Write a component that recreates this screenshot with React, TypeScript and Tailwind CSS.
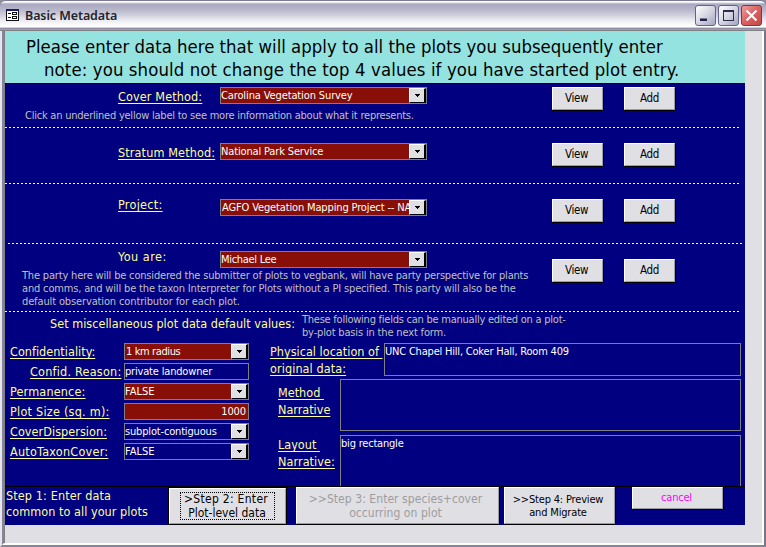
import React from "react";
import clsx from "clsx";

const base = "block whitespace-pre font-['DejaVu_Sans_Condensed','DejaVu_Sans',sans-serif]";

function Label({ text, link = true, className }: { text: string; link?: boolean; className?: string }) {
  return (
    <span className={clsx(base, "text-[12.5px] leading-[17px] text-[#ffff99]", className)}>
      <span className={clsx(link && "underline decoration-1 underline-offset-2 [text-decoration-skip-ink:none]")}>{text}</span>
    </span>
  );
}

function Field({ text, combo, red, className, textClass }: { text: string; combo?: boolean; red?: boolean; className?: string; textClass?: string }) {
  return (
    <div className={clsx("flex shrink-0 border border-[#808080]", red ? "bg-[#880e08]" : "bg-[#000080]", className)}>
      <span className={clsx(base, "min-w-0 flex-1 overflow-hidden text-[11px] leading-[15px] text-white", textClass)}>{text}</span>
      {combo && (
        <span className="flex h-[15px] w-[17px] shrink-0 items-center justify-center border-t border-r-2 border-b border-l border-t-white border-r-black border-b-black border-l-white bg-[#e0dfe3]">
          <svg width="5" height="3" viewBox="0 0 5 3" shapeRendering="crispEdges">
            <path d="M0 0h5v1H0zM1 1h3v1H1zM2 2h1v1H2z" />
          </svg>
        </span>
      )}
    </div>
  );
}

function Button({ children, className }: { children: React.ReactNode; className?: string }) {
  return (
    <div className={clsx("shrink-0 border-r border-b border-black", className)}>
      <button className={clsx(base, "flex h-full w-full items-center justify-center border border-t-white border-r-[#9d9da1] border-b-[#9d9da1] border-l-white bg-[#e0dfe3]")}>
        {children}
      </button>
    </div>
  );
}

function Dashes({ className }: { className?: string }) {
  return <div className={clsx("h-px w-[735px] shrink-0 bg-[repeating-linear-gradient(90deg,#ffffcc_0_2px,transparent_2px_4px)]", className)} />;
}

type SectionProps = {
  label: string;
  value: string;
  link?: boolean;
  className: string;
  labelClass: string;
  valueClass: string;
  buttonClass?: string;
  children?: React.ReactNode;
};

function Section({ label, value, link, className, labelClass, valueClass, buttonClass, children }: SectionProps) {
  return (
    <div className={clsx("flex shrink-0 items-start", className)}>
      <div className="w-[547px] shrink-0">
        <div className="flex h-[17px] items-start pl-[113px]">
          <div className="w-[102px] shrink-0">
            <Label text={label} link={link} className={labelClass} />
          </div>
          <Field text={value} combo red className="h-[17px] w-[207px]" textClass={valueClass} />
        </div>
        {children}
      </div>
      <div className={clsx("flex gap-[20px] text-[11.5px]", buttonClass)}>
        <Button className="h-[24px] w-[52px] tracking-[-0.4px]">
          <span className="pt-px pr-[2px]">View</span>
        </Button>
        <Button className="h-[24px] w-[52px] tracking-[-0.3px]">
          <span className="pt-px">Add</span>
        </Button>
      </div>
    </div>
  );
}

function TitleBar() {
  return (
    <div className="flex h-[31px] shrink-0 items-start rounded-t-[6px] border-t border-[#7b7b98] bg-[linear-gradient(180deg,#fff_0,#fff_1px,#a9a8c0_3px,#b5b4c8_8px,#cfcfdc_14px,#eeeef3_20px,#fff_25px,#fff_26px,#a5a4b8_27px,#77768f_28px,#c9c8d2_29px,#808080_29px)] pl-[6px]">
      <svg className="mt-[8px] shrink-0" width="13" height="12" viewBox="0 0 13 12" shapeRendering="crispEdges">
        <path d="M0 0h13v12H0z" fill="#111" />
        <path d="M1 2h11v9H1z" fill="#fff" />
        <path d="M0 0h13v2H0z" fill="#1c1c6c" />
        <path d="M2 4h3v1H2zM2 8h3v1H2zM6 3h5v3H6zM6 7h5v3H6z" fill="#111" />
        <path d="M7 4h3v1H7zM7 8h3v1H7z" fill="#fff" />
      </svg>
      <span className="ml-[6px] mt-[6px] w-[670px] shrink-0 whitespace-pre font-['Noto_Sans',sans-serif] text-[12.5px] leading-[18px] font-semibold tracking-[-0.1px] text-[#24242e]">Basic Metadata</span>
      <div className="mt-[4px] flex shrink-0 gap-[2px]">
        <span className="flex h-[21px] w-[21px] rounded-[3px] border border-[#62628a] bg-[linear-gradient(135deg,#fff,#dadae6_45%,#a4a4c0)] pl-[4px] pt-[12px]">
          <span className="h-[3px] w-[7px] border-t border-[#77778f] bg-[#222244]" />
        </span>
        <span className="flex h-[21px] w-[21px] items-center justify-center rounded-[3px] border border-[#62628a] bg-[linear-gradient(135deg,#fff,#dadae6_45%,#a4a4c0)]">
          <span className="h-[11px] w-[11px] border border-t-2 border-[#2c2c48]" />
        </span>
        <span className="flex h-[21px] w-[21px] items-center justify-center rounded-[3px] border border-[#8c3040] bg-[linear-gradient(135deg,#f0a0a0,#dc6464_45%,#c04848)]">
          <svg width="13" height="13" viewBox="0 0 13 13">
            <path d="M1.5 1.5l10 10M11.5 1.5l-10 10" stroke="#fff" strokeWidth="2.2" />
          </svg>
        </span>
      </div>
    </div>
  );
}

const grey = "text-[11px] leading-[13px] text-[#c0c0c0]";

export default function App() {
  return (
    <div className="flex h-[547px] w-[766px] flex-col overflow-hidden bg-[#8f8e9f]">
      <TitleBar />
      <div className="flex h-[516px] flex-col border-r-2 border-b-2 border-l-2 border-r-[#77768f] border-b-[#8584a0] border-l-[#e6e6ec]">
        <div className="flex h-[514px] flex-col border-r-2 border-b-2 border-l-2 border-r-[#fffdf5] border-b-[#fffdf5] border-l-[#8685a0] bg-[#e0dfe3]">
          <div className="flex h-[512px] flex-col border-l border-[#808080]">
            <div className="h-[53px] w-[740px] shrink-0 border-b border-black bg-[#94e3e1] pt-[4px] text-[18.4px] leading-[23px] text-black">
              <p className={clsx(base, "pl-[21px] tracking-[0.01px]")}>Please enter data here that will apply to all the plots you subsequently enter</p>
              <p className={clsx(base, "pl-[39px] tracking-[0.11px]")}>note: you should not change the top 4 values if you have started plot entry.</p>
            </div>
            <div className="flex h-[402px] w-[740px] shrink-0 flex-col overflow-hidden bg-[#000080]">
              <Section label="Cover Method:" value="Carolina Vegetation Survey" className="h-[43px] pt-[3px]" labelClass="mt-[1px] tracking-[0.14px]" valueClass="tracking-[-0.12px]">
                <p className={clsx(base, grey, "pl-[20px] pt-[5px] tracking-[-0.23px]")}>Click an underlined yellow label to see more information about what it represents.</p>
              </Section>
              <Dashes />
              <Section label="Stratum Method:" value="National Park Service" className="h-[55px] pt-[15px]" labelClass="mt-[1px] tracking-[0.14px]" valueClass="tracking-[-0.15px]" />
              <Dashes />
              <Section label="Project:" value="AGFO Vegetation Mapping Project -- NA" className="h-[59px] pt-[15px]" labelClass="-mt-[3px] tracking-[0.3px]" valueClass="pl-px tracking-[-0.14px]" />
              <Dashes className="ml-[3px]" />
              <Section label="You are:" link={false} value="Michael Lee" className="h-[67px] pt-[7px]" labelClass="-mt-[3px] tracking-[0.5px]" valueClass="tracking-[-0.3px]" buttonClass="mt-[8px]">
                <div className={clsx(grey, "pl-[17px] pt-px")}>
                  <p className={clsx(base, "tracking-[-0.18px]")}>The party here will be considered the submitter of plots to vegbank, will have party perspective for plants</p>
                  <p className={clsx(base, "tracking-[-0.16px]")}>and comms, and will be the taxon Interpreter for Plots without a PI specified. This party will also be the</p>
                  <p className={clsx(base, "tracking-[-0.13px]")}>default observation contributor for each plot.</p>
                </div>
              </Section>
              <Dashes />
              <div className="flex h-[31px] shrink-0 items-start pl-[45px]">
                <Label link={false} text="Set miscellaneous plot data default values:" className="mt-[3px] w-[252px] tracking-[0.04px]" />
                <div className={clsx(grey, "mt-px")}>
                  <p className={clsx(base, "tracking-[-0.24px]")}>These following fields can be manually edited on a plot-</p>
                  <p className={clsx(base, "tracking-[-0.16px]")}>by-plot basis in the next form.</p>
                </div>
              </div>
              <div className="flex h-[143px] shrink-0 items-start pl-[5px]">
                <div className="grid w-[260px] shrink-0 grid-cols-[114px_125px] auto-rows-[20px] items-start">
                  <Label text="Confidentiality:" className="tracking-[0.03px]" />
                  <Field text="1 km radius" combo red className="h-[17px]" textClass="pl-px tracking-[-0.38px]" />
                  <Label text="Confid. Reason:" className="pl-[20px] tracking-[0.23px]" />
                  <Field text="private landowner" className="h-[17px]" textClass="tracking-[-0.18px]" />
                  <Label text="Permanence:" className="tracking-[0.18px]" />
                  <Field text="FALSE" combo red className="h-[17px]" textClass="" />
                  <Label text="Plot Size (sq. m):" className="tracking-[0.25px]" />
                  <Field text="1000" red className="h-[17px]" textClass="pr-[2px] text-right tracking-[-0.1px]" />
                  <Label text="CoverDispersion:" className="tracking-[0.06px]" />
                  <Field text="subplot-contiguous" combo className="h-[17px]" textClass="tracking-[-0.17px]" />
                  <Label text="AutoTaxonCover:" className="tracking-[0.25px]" />
                  <Field text="FALSE" combo className="h-[17px]" textClass="" />
                </div>
                <div className="w-[471px]">
                  <div className="flex h-[33px]">
                    <div className="w-[114px] shrink-0">
                      <Label text="Physical location of " className="leading-[17px]! tracking-[0.03px]" />
                      <Label text="original data:" className="leading-[17px]! tracking-[0.1px]" />
                    </div>
                    <Field text="UNC Chapel Hill, Coker Hall, Room 409" className="h-[33px] w-[357px]" textClass="tracking-[-0.2px]" />
                  </div>
                  <div className="mt-[3px] flex pl-[8px]">
                    <div className="w-[62px] shrink-0 pt-[5px]">
                      <Label text="Method " className="leading-[17px]! tracking-[0.02px]" />
                      <Label text="Narrative" className="leading-[17px]!" />
                    </div>
                    <Field text="" className="h-[52px] w-[401px]" />
                  </div>
                  <div className="mt-[4px] flex pl-[8px]">
                    <div className="w-[62px] shrink-0 pt-px">
                      <Label text="Layout " className="leading-[17px]! tracking-[0.02px]" />
                      <Label text="Narrative:" className="leading-[17px]! tracking-[0.08px]" />
                    </div>
                    <Field text="big rectangle" className="h-[60px] w-[401px]" textClass="tracking-[-0.2px]" />
                  </div>
                </div>
              </div>
            </div>
            <div className="flex h-[39px] w-[740px] shrink-0 items-start border-t border-black bg-[#000080]">
              <div className="w-[163px] shrink-0 pl-px pt-px">
                <Label link={false} text="Step 1: Enter data" className="leading-[16px]! tracking-[0.13px]" />
                <Label link={false} text="common to all your plots" className="leading-[16px]! tracking-[0.06px]" />
              </div>
              <Button className="h-[38px] w-[119px] border-t border-l text-[12px] leading-[14px]">
                <span className="flex h-[28px] w-[95px] flex-col items-center border border-dotted border-black pr-[3px] leading-[14px]">
                  <span className="-mt-px tracking-[0.3px]">{">Step 2: Enter"}</span>
                  <span className="pl-[2px]">Plot-level data</span>
                </span>
              </Button>
              <Button className="ml-[9px] h-[38px] w-[204px] text-[12px] leading-[14px] tracking-[0.06px] text-[#9d9da1] [text-shadow:1px_1px_0_#fff]">
                <span className="pr-[4px]">{">>Step 3: Enter species+cover\noccurring on plot"}</span>
              </Button>
              <Button className="ml-[4px] h-[38px] w-[112px] text-[11px] leading-[13px] tracking-[-0.17px]">
                <span className="pr-[3px]">{">>Step 4: Preview\nand Migrate"}</span>
              </Button>
              <Button className="ml-[16px] h-[23px] w-[92px] text-[11px] tracking-[-0.2px] text-[#ff00ff]">
                <span className="pt-px pr-[2px]">cancel</span>
              </Button>
            </div>
          </div>
        </div>
      </div>
    </div>
  );
}
